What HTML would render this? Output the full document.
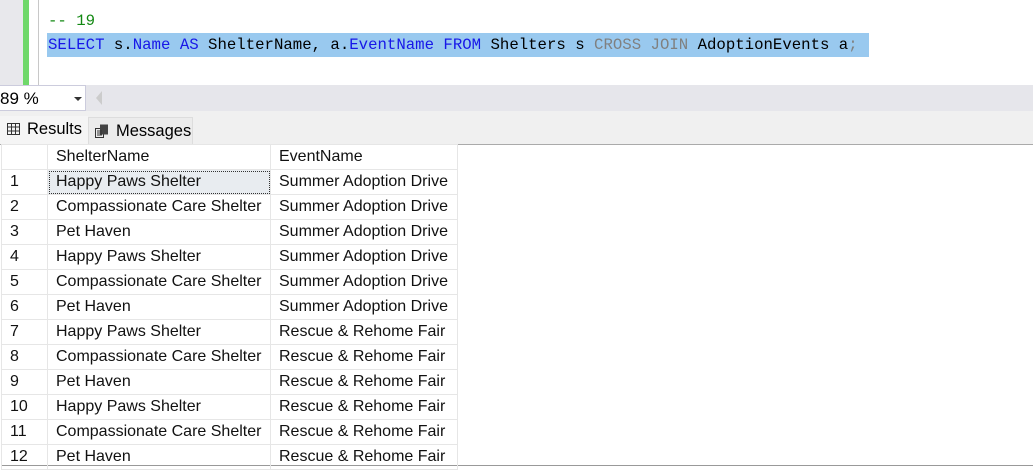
<!DOCTYPE html>
<html><head><style>
body{margin:0;width:1033px;height:468px;overflow:hidden;background:#fff;font-family:"Liberation Sans",sans-serif;position:relative}
.abs{position:absolute}
.code{font-family:"Liberation Mono",monospace;font-size:15.7px;white-space:pre;line-height:24px}
table{border-collapse:collapse;font-size:16px;color:#111}
td{height:24px;border:1px solid #e6e6e6;padding:0 0 0 8px;white-space:nowrap;line-height:24px}
</style></head><body>
<div class="abs" style="left:0;top:0;width:23px;height:85px;background:#e8e8ec"></div>
<div class="abs" style="left:23px;top:0;width:6px;height:85px;background:#6fd86a"></div>
<div class="abs" style="left:38px;top:0;width:1px;height:85px;background:#c8c8c8"></div>
<div class="abs code" style="left:48px;top:9px;color:#118811">-- 19</div>
<div class="abs" style="left:47px;top:33px;width:822px;height:24px;background:#99c9ef"></div>
<div class="abs code" style="left:48px;top:33px;color:#000"><span style="color:#1717e8">SELECT</span> s.<span style="color:#1717e8">Name</span> <span style="color:#1717e8">AS</span> ShelterName, a.<span style="color:#1717e8">EventName</span> <span style="color:#1717e8">FROM</span> Shelters s <span style="color:#808080">CROSS JOIN</span> AdoptionEvents a<span style="color:#808080">;</span></div>
<div class="abs code" style="left:66px;top:74px;color:#118811;height:11px;overflow:hidden">--</div>
<div class="abs" style="left:0;top:85px;width:1033px;height:26px;background:#e6e6eb"></div>
<div class="abs" style="left:0;top:85px;width:85px;height:24px;background:#fff;border:1px solid #ccd;border-left:none;font-size:17px;line-height:26px">89 %</div>
<div class="abs" style="left:74px;top:97px;width:0;height:0;border-left:4px solid transparent;border-right:4px solid transparent;border-top:4px solid #333"></div>
<div class="abs" style="left:96px;top:91px;width:0;height:0;border-top:7px solid transparent;border-bottom:7px solid transparent;border-right:6px solid #ccc"></div>
<div class="abs" style="left:0;top:111px;width:1033px;height:33px;background:#f0f0f0;border-bottom:1px solid #aaa"></div>
<div class="abs" style="left:0;top:116px;width:88px;height:28px;background:#f5f5f5;font-size:16.5px;line-height:26px">
<svg class="abs" style="left:7px;top:7px" width="13" height="12" viewBox="0 0 13 12"><rect x="0.5" y="0.5" width="12" height="11" fill="none" stroke="#333"/><path d="M0 4H13M0 8H13M4.5 0V12M8.5 0V12" stroke="#333"/></svg>
<span class="abs" style="left:27px">Results</span></div>
<div class="abs" style="left:88px;top:117px;width:103px;height:27px;background:#ececec;border:1px solid #ddd;border-bottom:none;font-size:16.5px;line-height:26px">
<svg class="abs" style="left:6px;top:6px" width="14" height="14" viewBox="0 0 14 14"><rect x="0.5" y="4.5" width="8" height="9" fill="none" stroke="#333"/><rect x="5" y="0.5" width="8" height="10" fill="#444"/><path d="M2 7H7M2 9H7M2 11H7" stroke="#333"/></svg>
<span class="abs" style="left:27px">Messages</span></div>
<div class="abs" style="left:1px;top:145px;width:1032px;height:320px;border-left:1px solid #999;border-bottom:1px solid #999"></div>
<table class="abs" style="left:1px;top:144px">
<tr><td style="width:37px"></td><td style="width:214px">ShelterName</td><td style="width:178px">EventName</td></tr>
<tr><td>1</td><td style="outline:1px dotted #333;outline-offset:-2px;background:#e8ecf0">Happy Paws Shelter</td><td>Summer Adoption Drive</td></tr>
<tr><td>2</td><td>Compassionate Care Shelter</td><td>Summer Adoption Drive</td></tr>
<tr><td>3</td><td>Pet Haven</td><td>Summer Adoption Drive</td></tr>
<tr><td>4</td><td>Happy Paws Shelter</td><td>Summer Adoption Drive</td></tr>
<tr><td>5</td><td>Compassionate Care Shelter</td><td>Summer Adoption Drive</td></tr>
<tr><td>6</td><td>Pet Haven</td><td>Summer Adoption Drive</td></tr>
<tr><td>7</td><td>Happy Paws Shelter</td><td>Rescue &amp; Rehome Fair</td></tr>
<tr><td>8</td><td>Compassionate Care Shelter</td><td>Rescue &amp; Rehome Fair</td></tr>
<tr><td>9</td><td>Pet Haven</td><td>Rescue &amp; Rehome Fair</td></tr>
<tr><td>10</td><td>Happy Paws Shelter</td><td>Rescue &amp; Rehome Fair</td></tr>
<tr><td>11</td><td>Compassionate Care Shelter</td><td>Rescue &amp; Rehome Fair</td></tr>
<tr><td>12</td><td>Pet Haven</td><td>Rescue &amp; Rehome Fair</td></tr>
</table>
</body></html>
